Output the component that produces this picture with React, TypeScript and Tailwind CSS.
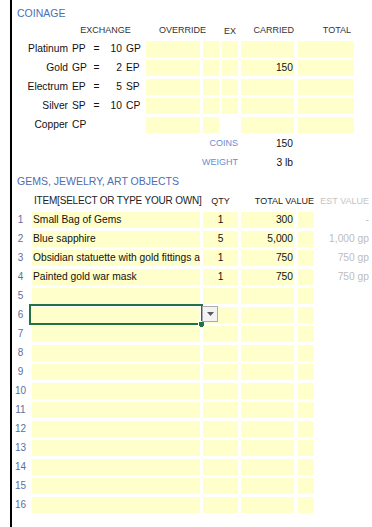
import React from 'react';

type Coin = { name: string; code: string; rate?: string; unit?: string; carried?: string };

const coins: Coin[] = [
  { name: 'Platinum', code: 'PP', rate: '10', unit: 'GP' },
  { name: 'Gold', code: 'GP', rate: '2', unit: 'EP', carried: '150' },
  { name: 'Electrum', code: 'EP', rate: '5', unit: 'SP' },
  { name: 'Silver', code: 'SP', rate: '10', unit: 'CP' },
  { name: 'Copper', code: 'CP' },
];

type Gem = { item: string; qty: string; total: string; est: string };

const gems: Gem[] = [
  { item: 'Small Bag of Gems', qty: '1', total: '300', est: '-' },
  { item: 'Blue sapphire', qty: '5', total: '5,000', est: '1,000 gp' },
  { item: 'Obsidian statuette with gold fittings and ivory inlay', qty: '1', total: '750', est: '750 gp' },
  { item: 'Painted gold war mask', qty: '1', total: '750', est: '750 gp' },
];

const SELECTED_ROW = 5;

const DropdownButton = () => (
  <div className="absolute left-[190px] top-[1px] w-[16px] h-[16px] border border-[#ababab] bg-[#f3f3f3] flex items-center justify-center">
    <svg width="7" height="4" viewBox="0 0 7 4">
      <polygon points="0,0 7,0 3.5,4" fill="#5a5a5a" />
    </svg>
  </div>
);

export default function App() {
  const rows = Array.from({ length: 16 }, (_, i) => gems[i] ?? null);

  return (
    <div className="w-[372px] h-[527px] bg-white overflow-hidden font-['Liberation_Sans',Arial,sans-serif] text-[#111]">
      <div className="ml-[10px] h-full border-l-2 border-black">
        {/* coinage */}
        <div className="h-[20px] flex items-end pl-[5px] text-[10.5px] leading-[14px] text-[#4e6db2]">COINAGE</div>
        <div className="h-[19px] flex items-center text-[9px] leading-[12px] text-[#333]">
          <div className="w-[56px]" />
          <div className="w-[75px] text-center">EXCHANGE</div>
          <div className="ml-[3px] w-[73px] text-center">OVERRIDE</div>
          <div className="ml-[3px] w-[16px] text-center pt-[2px]">EX</div>
          <div className="ml-[3px] w-[53px] text-right">CARRIED</div>
          <div className="ml-[4px] w-[56px] text-right pr-[3px]">TOTAL</div>
        </div>
        {coins.map((c) => (
          <div key={c.code} className="h-[19px] flex items-center text-[10.25px] leading-[16px]">
            <div className="w-[56px] text-right">{c.name}</div>
            <div className="ml-[4px] w-[20px]">{c.code}</div>
            <div className="w-[9px] text-center">{c.rate ? '=' : ''}</div>
            <div className="w-[21px] text-right">{c.rate}</div>
            <div className="w-[21px] pl-[4px]">{c.unit}</div>
            <div className="ml-[3px] w-[54px] h-[16px] bg-[#ffffcc]" />
            <div className="ml-[3px] w-[16px] h-[16px] bg-[#ffffcc]" />
            <div className={`ml-[3px] w-[16px] h-[16px] ${c.rate ? 'bg-[#ffffcc]' : 'bg-white'}`} />
            <div className="ml-[3px] w-[53px] h-[16px] bg-[#ffffcc] text-right pr-[1px]">{c.carried}</div>
            <div className="ml-[4px] w-[56px] h-[16px] bg-[#ffffcc]" />
          </div>
        ))}
        <div className="h-[19px] flex items-center">
          <div className="w-[226px] text-right text-[9px] text-[#6a8cd2]">COINS</div>
          <div className="ml-[3px] w-[53px] text-right pr-[1px] text-[10.25px]">150</div>
        </div>
        <div className="h-[19px] flex items-center">
          <div className="w-[226px] text-right text-[9px] text-[#6a8cd2]">WEIGHT</div>
          <div className="ml-[3px] w-[53px] text-right pr-[1px] text-[10.25px]">3 lb</div>
        </div>

        {/* gems, jewelry, art objects */}
        <div className="h-[20px] flex items-center pl-[5px] text-[10.5px] text-[#4e6db2]">GEMS, JEWELRY, ART OBJECTS</div>
        <div className="h-[18px] flex items-center text-[9px] leading-[12px] text-[#222]">
          <div className="w-[17px]" />
          <div className="ml-[3px] w-[168px] pl-[2px] whitespace-nowrap text-[10px] tracking-[-0.2px]">ITEM[SELECT OR TYPE YOUR OWN]</div>
          <div className="ml-[3px] w-[35px] text-center">QTY</div>
          <div className="ml-[3px] w-[73px] text-right">TOTAL VALUE</div>
          <div className="ml-[4px] w-[52px] text-right pr-[1px] text-[#c4c4c4] whitespace-nowrap">EST VALUE</div>
        </div>
        {rows.map((g, i) => (
          <div key={i} className="relative h-[19px] flex items-center text-[10.25px] leading-[16px]">
            <div className="w-[17px] text-center text-[10px] text-[#5d6f9e]">{i + 1}</div>
            <div className="ml-[3px] w-[168px] h-[16px] bg-[#ffffcc] pl-[1px] overflow-hidden whitespace-nowrap">{g?.item}</div>
            <div className="ml-[3px] w-[35px] h-[16px] bg-[#ffffcc] text-center">{g?.qty}</div>
            <div className="ml-[3px] w-[53px] h-[16px] bg-[#ffffcc] text-right pr-[1px]">{g?.total}</div>
            <div className="ml-[4px] w-[16px] h-[16px] bg-[#ffffcc]" />
            <div className="ml-[4px] w-[52px] text-right pr-[1px] text-[#bdbdbd] whitespace-nowrap">{g?.est}</div>
            {i === SELECTED_ROW && (
              <>
                <div className="absolute left-[17px] top-[-1px] w-[174px] h-[21px] border-2 border-[#217346]" />
                <div className="absolute left-[186px] top-[16px] w-[7px] h-[7px] border border-white bg-[#217346]" />
                <DropdownButton />
              </>
            )}
          </div>
        ))}
      </div>
    </div>
  );
}
